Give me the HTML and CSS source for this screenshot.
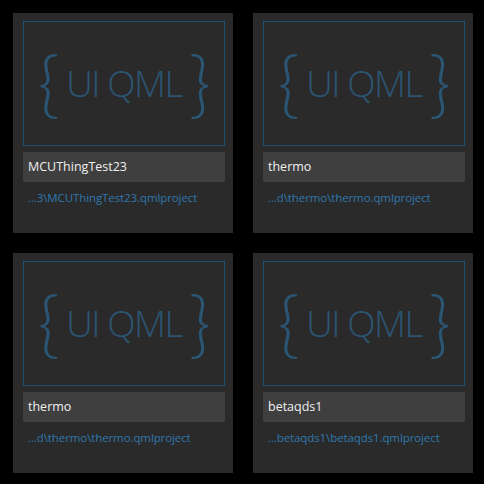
FILE: index.html
```html
<!DOCTYPE html>
<html lang="en">
<head>
    <meta charset="UTF-8">
    <title>Recent Projects</title>
    <link rel="stylesheet" href="styles.css">
</head>
<body>
    <div class="project-grid">
        <div class="project-card">
            <div class="thumb">
                <span class="brace">{</span>
                <span class="thumb-label">UI QML</span>
                <span class="brace">}</span>
            </div>
            <div class="project-name">MCUThingTest23</div>
            <div class="project-path">...3\MCUThingTest23.qmlproject</div>
        </div>
        <div class="project-card">
            <div class="thumb">
                <span class="brace">{</span>
                <span class="thumb-label">UI QML</span>
                <span class="brace">}</span>
            </div>
            <div class="project-name">thermo</div>
            <div class="project-path">...d\thermo\thermo.qmlproject</div>
        </div>
        <div class="project-card">
            <div class="thumb">
                <span class="brace">{</span>
                <span class="thumb-label">UI QML</span>
                <span class="brace">}</span>
            </div>
            <div class="project-name">thermo</div>
            <div class="project-path">...d\thermo\thermo.qmlproject</div>
        </div>
        <div class="project-card">
            <div class="thumb">
                <span class="brace">{</span>
                <span class="thumb-label">UI QML</span>
                <span class="brace">}</span>
            </div>
            <div class="project-name">betaqds1</div>
            <div class="project-path">...betaqds1\betaqds1.qmlproject</div>
        </div>
    </div>
</body>
</html>
```

FILE: styles.css
```css
* {
    margin: 0;
    padding: 0;
    box-sizing: border-box;
}
body {
    font-family: "Open Sans", "Noto Sans", sans-serif;
    background-color: #000;
    padding: 13px 11px 11px 13px;
}
.project-grid {
    display: grid;
    grid-template-columns: 220px 220px;
    grid-auto-rows: 220px;
    gap: 20px;
}
.project-card {
    background-color: #2a2a2a;
    padding: 8px 8px 0 10px;
    display: flex;
    flex-direction: column;
}
.thumb {
    height: 125px;
    border: 1px solid #1f4f6e;
    display: flex;
    align-items: center;
    justify-content: center;
    gap: 8px;
    color: #2a5673;
}
.thumb-label {
    font-size: 37px;
    font-weight: 300;
    letter-spacing: -1.5px;
    line-height: 1;
    padding-bottom: 2px;
}
.brace {
    font-family: Lato, "Open Sans", sans-serif;
    font-size: 66px;
    font-weight: 300;
    line-height: 1;
    transform: scale(1.15, 1.1);
    padding-bottom: 4px;
}
.project-name {
    margin-top: 6px;
    height: 30px;
    background-color: #3f3f3f;
    color: #f0f0f0;
    font-size: 12.5px;
    line-height: 30px;
    padding-left: 5px;
}
.project-path {
    margin-top: 8px;
    color: #2e78ad;
    font-size: 11.5px;
    letter-spacing: -0.1px;
    padding-left: 5px;
}
```
